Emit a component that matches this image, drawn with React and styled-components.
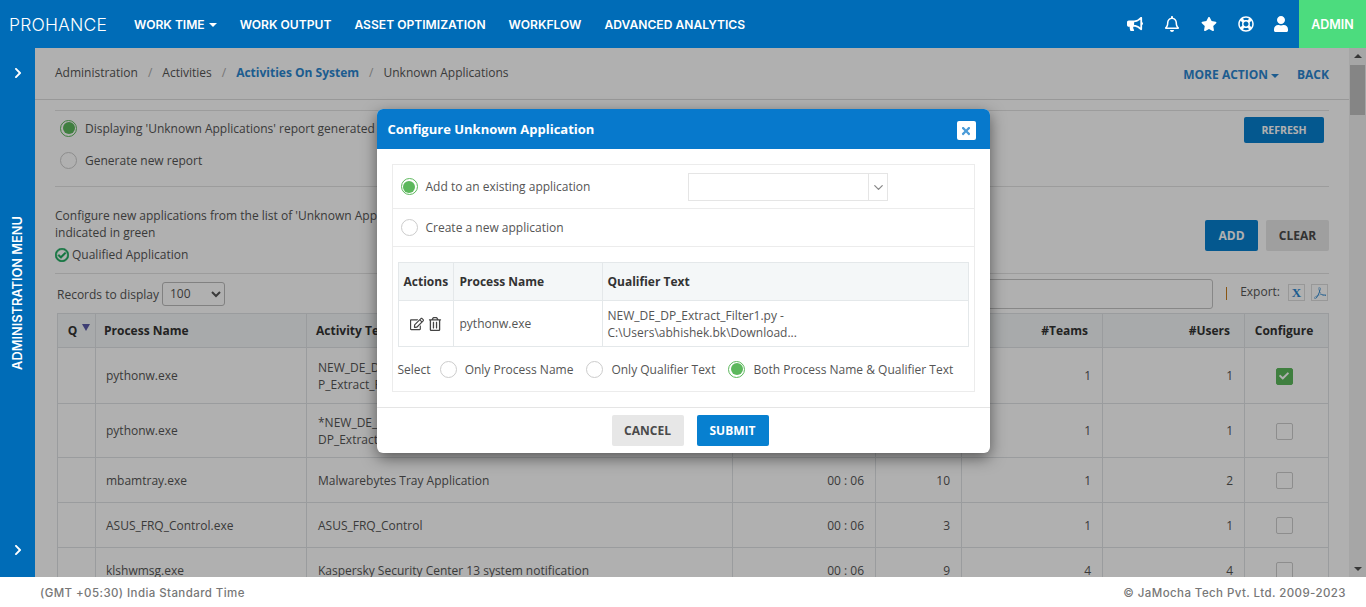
import React from "react";
import styled, { createGlobalStyle } from "styled-components";
import { FaBullhorn, FaRegBell, FaStar, FaRegLifeRing, FaUser, FaChevronRight, FaRegEdit, FaRegTrashAlt, FaCheck, FaRegCheckCircle, FaTimes } from "react-icons/fa";
import { SiAdobeacrobatreader } from "react-icons/si";
import { LuChevronDown } from "react-icons/lu";

const GlobalStyle = createGlobalStyle`
  html, body { margin: 0; padding: 0; height: 100%; overflow: hidden; }
  body { font-family: "Open Sans", "Liberation Sans", sans-serif; font-size: 12px; color: #555; background: #fff; }
  #root { height: 100%; }
  * { box-sizing: border-box; }
`;

const Page = styled.div`
  position: relative;
  height: 607px;
  display: flex;
  flex-direction: column;
`;

/* top bar ----------- */
const TopBar = styled.header`
  height: 48px;
  flex: none;
  background: #006cb7;
  display: flex;
  align-items: center;
  color: #fff;
`;
const Logo = styled.div`
  width: 134px;
  padding-left: 9px;
  font-family: Inter, sans-serif;
  font-weight: 300;
  font-size: 17.5px;
  letter-spacing: 0.2px;
  flex: none;
`;
const Nav = styled.nav`
  display: flex;
  gap: 23px;
  flex: 1;
`;
const NavItem = styled.span`
  font-family: Inter, sans-serif;
  font-weight: 600;
  font-size: 12.1px;
  white-space: nowrap;
  display: inline-flex;
  align-items: center;
  gap: 4px;
`;
const Caret = styled.i`
  display: inline-block;
  width: 0;
  height: 0;
  border-left: 4px solid transparent;
  border-right: 4px solid transparent;
  border-top: 4px solid currentColor;
  margin-top: 2px;
`;
const TopIcons = styled.div`
  display: flex;
  align-items: center;
  gap: 21px;
  font-size: 16px;
  margin-right: 10px;
  svg { display: block; }
  svg:last-child { margin-left: -2px; }
`;
const AdminTab = styled.div`
  width: 67px;
  height: 48px;
  background: #4cdc7e;
  display: flex;
  align-items: center;
  justify-content: center;
  font-family: Inter, sans-serif;
  font-weight: 600;
  font-size: 12.5px;
`;

/* middle ----------- */
const Body = styled.div`
  flex: 1;
  min-height: 0;
  display: flex;
`;
const SideMenu = styled.aside`
  width: 35px;
  flex: none;
  background: #006cb7;
  color: #fff;
  display: flex;
  flex-direction: column;
  align-items: center;
  justify-content: space-between;
  padding: 19px 0 21px;
  font-size: 12px;
`;
const SideLabel = styled.div`
  writing-mode: vertical-rl;
  transform: rotate(180deg);
  font-family: Inter, sans-serif;
  font-weight: 600;
  font-size: 12.8px;
  white-space: nowrap;
  margin-bottom: 38px;
`;
const Main = styled.main`
  position: relative;
  flex: 1;
  min-width: 0;
  display: flex;
  overflow: hidden;
  background: #fff;
`;
const Backdrop = styled.div`
  position: absolute;
  inset: 0;
  background: rgba(0, 0, 0, 0.31);
  z-index: 5;
`;
const Content = styled.div`
  flex: 1;
  min-width: 0;
  overflow: hidden;
`;
const Scrollbar = styled.div`
  width: 17px;
  flex: none;
  background: #f1f1f1;
  display: flex;
  flex-direction: column;
  align-items: center;
  padding-top: 6px;
`;
const ScrollArrow = styled.i`
  width: 0;
  height: 0;
  border-left: 4px solid transparent;
  border-right: 4px solid transparent;
  ${(p) => (p.$down ? "border-top: 4px solid #505050; margin-top: auto; margin-bottom: 6px;" : "border-bottom: 4px solid #505050;")}
`;
const ScrollThumb = styled.div`
  width: 15px;
  height: 50px;
  background: #c1c1c1;
  margin-top: 7px;
`;

const CrumbBar = styled.div`
  height: 52px;
  border-bottom: 1px solid #ddd;
  display: flex;
  align-items: flex-start;
  padding: 16px 20px 0;
  font-size: 12px;
`;
const Crumb = styled.span`
  color: ${(p) => (p.$active ? "#2b86cf" : "#555")};
  font-weight: ${(p) => (p.$active ? 700 : 400)};
`;
const CrumbSep = styled.span`
  color: #aaa;
  margin: 0 10px;
`;
const CrumbActions = styled.div`
  margin-left: auto;
  display: flex;
  align-items: center;
  gap: 18px;
  padding-right: 0;
  margin-top: 2px;
`;
const ActionLink = styled.span`
  color: #2b86cf;
  font-weight: 700;
  font-size: 12px;
  display: inline-flex;
  align-items: center;
  gap: 3px;
`;

const Section = styled.section`
  margin: 10px 20px 0;
  border-top: 1px solid #e2e2e2;
`;
const ReportBlock = styled.div`
  height: 76px;
  border-bottom: 1px solid #e2e2e2;
  position: relative;
  display: flex;
  flex-direction: column;
  padding: 8px 0 0 5px;
  gap: 14px;
`;
const ReportRow = styled.label`
  display: flex;
  align-items: center;
  gap: 8px;
  height: 18px;
`;
const RefreshRow = styled.div`
  position: absolute;
  right: 5px;
  top: 6px;
`;
const Btn = styled.button`
  border: 0;
  border-radius: 2px;
  font-family: inherit;
  font-weight: 700;
  height: ${(p) => p.$h || 31}px;
  width: ${(p) => p.$w}px;
  font-size: ${(p) => p.$fs || 12}px;
  padding: 0;
  background: ${(p) => (p.$plain ? "#e7e7e7" : "#0780d0")};
  color: ${(p) => (p.$plain ? "#4a4a4a" : "#fff")};
`;
const ConfigBlock = styled.div`
  height: 87px;
  border-bottom: 1px solid #e2e2e2;
  padding-top: 20px;
  position: relative;
  line-height: 17px;
`;
const ConfigLine = styled.div`
  white-space: nowrap;
`;
const Qualified = styled.div`
  display: flex;
  align-items: center;
  gap: 3px;
  margin-top: 5px;
  svg { color: #17a85a; font-size: 14px; stroke: currentColor; stroke-width: 24px; }
`;
const ConfigButtons = styled.div`
  position: absolute;
  right: 0;
  top: 33px;
  display: flex;
  gap: 8px;
`;
const ToolRow = styled.div`
  height: 39px;
  display: flex;
  align-items: center;
  padding-left: 2px;
`;
const RecordsLabel = styled.span`
  margin-right: 3px;
  padding-top: 2px;
`;
const RecordsSelect = styled.select`
  width: 63px;
  height: 24px;
  border: 1px solid #bbb;
  border-radius: 3px;
  background: #fff;
  color: #555;
  font: 12px "Open Sans", sans-serif;
  padding-left: 3px;
`;
const SearchBox = styled.input`
  margin-left: auto;
  width: 400px;
  height: 30px;
  border: 1px solid #c4c4c4;
  border-radius: 3px;
  background: #fff;
`;
const ExportSep = styled.span`
  width: 1px;
  height: 13px;
  background: #c77d1d;
  margin: 0 13px;
`;
const ExportLabel = styled.span`
  margin-bottom: 5px;
`;
const ExportBtn = styled.span`
  width: 17px;
  height: 17px;
  border: 1px solid #ddd;
  display: flex;
  align-items: center;
  justify-content: center;
  color: #2b86cf;
  font: 700 13px "Liberation Serif", serif;
  margin-bottom: 2px;
  margin-left: ${(p) => (p.$first ? 8 : 6)}px;
  margin-right: ${(p) => (p.$first ? 0 : 1)}px;
`;

const DataTable = styled.table`
  border-collapse: collapse;
  table-layout: fixed;
  margin-left: 2px;
  width: 1271px;
  th, td { border: 1px solid #dfe3e5; padding: 0 10px; font-size: 12px; }
  th {
    height: 34px;
    padding: 0 8px;
    background: #f4f7f8;
    color: #333;
    font-weight: 700;
    text-align: left;
  }
  th:nth-child(3) { padding-left: 9px; }
  td:nth-child(3) { padding-left: 11px; }
  td { line-height: 17px; color: #555; }
`;
const NumTh = styled.th`
  && { text-align: right; padding-right: 14px; }
`;
const NumTd = styled.td`
  && { text-align: right; padding-right: 11px; }
`;
const CenterCell = styled.td`
  && { text-align: center; padding: 0 5px 0 0; }
`;
const CenterHead = styled.th`
  && { text-align: center; padding: 0 5px 0 0; }
`;
const QHead = styled.th`
  && { text-align: center; padding: 0 0 0 5px; }
`;
const SortArrow = styled.i`
  display: inline-block;
  width: 0;
  height: 0;
  border-left: 4px solid transparent;
  border-right: 4px solid transparent;
  border-top: 7px solid #5a5aa8;
  margin-left: 5px;
  vertical-align: 4px;
`;
const Tick = styled.span`
  display: inline-flex;
  width: 17px;
  height: 17px;
  vertical-align: middle;
  border-radius: 2px;
  align-items: center;
  justify-content: center;
  color: #fff;
  font-size: 10px;
  background: ${(p) => (p.$on ? "#5cb85c" : "#fff")};
  border: 1px solid ${(p) => (p.$on ? "#5cb85c" : "#ccc")};
`;

const Radio = styled.span`
  width: 17px;
  height: 17px;
  flex: none;
  border-radius: 50%;
  background: #fff;
  border: 1px solid ${(p) => (p.$on ? "#5cb85c" : "#ccc")};
  display: inline-flex;
  align-items: center;
  justify-content: center;
  &::after {
    content: "";
    display: ${(p) => (p.$on ? "block" : "none")};
    width: 12px;
    height: 12px;
    border-radius: 50%;
    background: #5cb85c;
  }
`;

/* modal ----------- */
const Modal = styled.div`
  position: absolute;
  top: 109px;
  left: calc(50% - 306.5px);
  width: 613px;
  height: 344px;
  background: #fff;
  border-radius: 6px;
  box-shadow: 0 5px 15px rgba(0, 0, 0, 0.5);
  z-index: 10;
  display: flex;
  flex-direction: column;
  overflow: hidden;
`;
const ModalHead = styled.div`
  height: 40px;
  flex: none;
  background: #0779cc;
  color: #fff;
  display: flex;
  align-items: center;
  justify-content: space-between;
  padding: 0 14px 0 11px;
`;
const ModalTitle = styled.h4`
  margin: 0;
  font-size: 13px;
  font-weight: 700;
`;
const CloseBtn = styled.span`
  width: 19px;
  height: 19px;
  margin-top: 3px;
  background: #fff;
  border-radius: 2px;
  display: flex;
  align-items: center;
  justify-content: center;
  color: #4a9bd8;
  font-size: 12px;
`;
const ModalBody = styled.div`
  flex: 1;
  padding: 15px 15px 15px;
  border-bottom: 1px solid #e5e5e5;
`;
const FormBox = styled.div`
  border: 1px solid #ececec;
  height: 228px;
`;
const FormRow = styled.div`
  height: ${(p) => p.$h}px;
  border-bottom: 1px solid #ececec;
  display: flex;
  align-items: center;
  padding-left: 8px;
  gap: 8px;
`;
const Picker = styled.div`
  margin-left: 90px;
  width: 200px;
  height: 28px;
  border: 1px solid #e5e5e5;
  display: flex;
  justify-content: flex-end;
`;
const PickerArrow = styled.span`
  width: 19px;
  border-left: 1px solid #e5e5e5;
  display: flex;
  align-items: center;
  justify-content: center;
  color: #888;
  font-size: 15px;
  padding-top: 2px;
`;
const ProcessTable = styled.table`
  border-collapse: collapse;
  table-layout: fixed;
  width: 570px;
  margin: 15px 0 0 5px;
  th, td { border: 1px solid #e4e8ea; font-size: 12px; padding: 0 5px 0 6px; }
  th:first-child, td:first-child, th:last-child, td:last-child { padding-left: 5px; }
  th {
    height: 38px;
    background: #f4f7f8;
    color: #333;
    font-weight: 700;
    text-align: left;
  }
  td { height: 46px; line-height: 17px; color: #555; }
`;
const RowIcons = styled.div`
  display: flex;
  justify-content: center;
  align-items: center;
  gap: 4px;
  color: #444;
  font-size: 14px;
`;
const SelectRow = styled.div`
  display: flex;
  align-items: center;
  height: 44px;
  padding-left: 5px;
`;
const SelectLabel = styled.span`
  margin-right: 9px;
`;
const SelectOption = styled.label`
  display: flex;
  align-items: center;
  gap: 8px;
  margin-right: 13px;
`;
const ModalFoot = styled.div`
  height: 46px;
  flex: none;
  display: flex;
  justify-content: center;
  align-items: flex-start;
  gap: 13px;
  padding: 7px 0 0 14px;
`;

/* footer ----------- */
const Footer = styled.footer`
  height: 30px;
  flex: none;
  background: #fff;
  display: flex;
  align-items: center;
  justify-content: space-between;
  padding: 1px 20px 0 40px;
  font-family: Inter, sans-serif;
  font-size: 11.5px;
  letter-spacing: 0.42px;
  font-weight: 500;
  color: #777;
  position: relative;
  z-index: 6;
`;

const rows = [
  { name: "pythonw.exe", text: ["NEW_DE_DP_Extract_Filter1.py - C:\\Users", "P_Extract_Filter1.py"], time: "00 : 06", dev: "2", teams: "1", users: "1", on: true, h: 56 },
  { name: "pythonw.exe", text: ["*NEW_DE_DP_Extract_Filter1.py - C:\\Users", "DP_Extract_Filter1.py"], time: "00 : 06", dev: "2", teams: "1", users: "1", h: 54 },
  { name: "mbamtray.exe", text: ["Malwarebytes Tray Application"], time: "00 : 06", dev: "10", teams: "1", users: "2", h: 45 },
  { name: "ASUS_FRQ_Control.exe", text: ["ASUS_FRQ_Control"], time: "00 : 06", dev: "3", teams: "1", users: "1", h: 45 },
  { name: "klshwmsg.exe", text: ["Kaspersky Security Center 13 system notification"], time: "00 : 06", dev: "9", teams: "4", users: "4", h: 45 },
];

export default function App() {
  return (
    <Page>
      <GlobalStyle />
      <TopBar>
        <Logo>PROHANCE</Logo>
        <Nav>
          <NavItem>WORK TIME <Caret /></NavItem>
          <NavItem>WORK OUTPUT</NavItem>
          <NavItem>ASSET OPTIMIZATION</NavItem>
          <NavItem>WORKFLOW</NavItem>
          <NavItem>ADVANCED ANALYTICS</NavItem>
        </Nav>
        <TopIcons>
          <FaBullhorn />
          <FaRegBell />
          <FaStar />
          <FaRegLifeRing />
          <FaUser />
        </TopIcons>
        <AdminTab>ADMIN</AdminTab>
      </TopBar>

      <Body>
        <SideMenu>
          <FaChevronRight />
          <SideLabel>ADMINISTRATION MENU</SideLabel>
          <FaChevronRight />
        </SideMenu>
        <Main>
          <Content>
            <CrumbBar>
              <Crumb>Administration</Crumb>
              <CrumbSep>/</CrumbSep>
              <Crumb>Activities</Crumb>
              <CrumbSep>/</CrumbSep>
              <Crumb $active>Activities On System</Crumb>
              <CrumbSep>/</CrumbSep>
              <Crumb>Unknown Applications</Crumb>
              <CrumbActions>
                <ActionLink>MORE ACTION <Caret /></ActionLink>
                <ActionLink>BACK</ActionLink>
              </CrumbActions>
            </CrumbBar>
            <Section>
              <ReportBlock>
                <ReportRow><Radio $on /> Displaying 'Unknown Applications' report generated on 12 Jan 2023</ReportRow>
                <ReportRow><Radio /> Generate new report</ReportRow>
                <RefreshRow><Btn $w={80} $h={26} $fs={10.5}>REFRESH</Btn></RefreshRow>
              </ReportBlock>
              <ConfigBlock>
                <ConfigLine>Configure new applications from the list of 'Unknown Applications' below. Applications already matching a rule of the current 'Evaluation Order' are</ConfigLine>
                <ConfigLine>indicated in green</ConfigLine>
                <Qualified><FaRegCheckCircle /> Qualified Application</Qualified>
                <ConfigButtons>
                  <Btn $w={53}>ADD</Btn>
                  <Btn $w={63} $plain>CLEAR</Btn>
                </ConfigButtons>
              </ConfigBlock>
              <ToolRow>
                <RecordsLabel>Records to display</RecordsLabel>
                <RecordsSelect defaultValue="100">
                  <option>100</option>
                </RecordsSelect>
                <SearchBox />
                <ExportSep />
                <ExportLabel>Export:</ExportLabel>
                <ExportBtn $first>X</ExportBtn>
                <ExportBtn><SiAdobeacrobatreader size={12} /></ExportBtn>
              </ToolRow>
              <DataTable>
                <colgroup>
                  <col width="38" /><col width="211" /><col width="426" /><col width="143" />
                  <col width="86" /><col width="141" /><col width="142" /><col width="84" />
                </colgroup>
                <thead>
                  <tr>
                    <QHead>Q<SortArrow /></QHead>
                    <th>Process Name</th>
                    <th>Activity Text</th>
                    <NumTh>Duration</NumTh>
                    <NumTh>#Devices</NumTh>
                    <NumTh>#Teams</NumTh>
                    <NumTh>#Users</NumTh>
                    <CenterHead>Configure</CenterHead>
                  </tr>
                </thead>
                <tbody>
                  {rows.map((r, i) => (
                    <tr key={i} style={{ height: r.h }}>
                      <td />
                      <td>{r.name}</td>
                      <td>{r.text.map((t) => <div key={t}>{t}</div>)}</td>
                      <NumTd>{r.time}</NumTd>
                      <NumTd>{r.dev}</NumTd>
                      <NumTd>{r.teams}</NumTd>
                      <NumTd>{r.users}</NumTd>
                      <CenterCell><Tick $on={r.on}>{r.on && <FaCheck />}</Tick></CenterCell>
                    </tr>
                  ))}
                </tbody>
              </DataTable>
            </Section>
          </Content>
          <Scrollbar>
            <ScrollArrow />
            <ScrollThumb />
            <ScrollArrow $down />
          </Scrollbar>
          <Backdrop />
        </Main>
      </Body>

      <Footer>
        <span>(GMT +05:30) India Standard Time</span>
        <span>© JaMocha Tech Pvt. Ltd. 2009-2023</span>
      </Footer>

      <Modal>
        <ModalHead>
          <ModalTitle>Configure Unknown Application</ModalTitle>
          <CloseBtn><FaTimes /></CloseBtn>
        </ModalHead>
        <ModalBody>
          <FormBox>
            <FormRow $h={44}>
              <Radio $on /> Add to an existing application
              <Picker><PickerArrow><LuChevronDown /></PickerArrow></Picker>
            </FormRow>
            <FormRow $h={38}>
              <Radio /> Create a new application
            </FormRow>
            <ProcessTable>
              <colgroup><col width="55" /><col width="149" /><col width="366" /></colgroup>
              <thead>
                <tr><th>Actions</th><th>Process Name</th><th>Qualifier Text</th></tr>
              </thead>
              <tbody>
                <tr>
                  <td><RowIcons><FaRegEdit /><FaRegTrashAlt /></RowIcons></td>
                  <td>pythonw.exe</td>
                  <td>NEW_DE_DP_Extract_Filter1.py -<br />C:\Users\abhishek.bk\Download...</td>
                </tr>
              </tbody>
            </ProcessTable>
            <SelectRow>
              <SelectLabel>Select</SelectLabel>
              <SelectOption><Radio /> Only Process Name</SelectOption>
              <SelectOption><Radio /> Only Qualifier Text</SelectOption>
              <SelectOption><Radio $on /> Both Process Name &amp; Qualifier Text</SelectOption>
            </SelectRow>
          </FormBox>
        </ModalBody>
        <ModalFoot>
          <Btn $w={72} $plain>CANCEL</Btn>
          <Btn $w={72}>SUBMIT</Btn>
        </ModalFoot>
      </Modal>
    </Page>
  );
}
